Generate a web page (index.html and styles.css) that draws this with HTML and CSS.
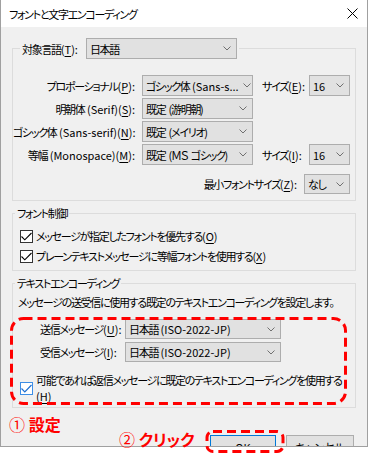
FILE: index.html
```html
<!DOCTYPE html>
<html>
  <head>
    <meta charset="utf-8">
    <title>フォントと文字エンコーディング</title>
    <link rel="stylesheet" href="styles.css">
  </head>
  <body>
    <div class="dialog">
      <div class="titlebar">
        <span class="title">フォントと文字エンコーディング</span>
        <svg class="close" width="11" height="11" viewBox="0 0 11 11"><path d="M0.5 0.5 L10.5 10.5 M10.5 0.5 L0.5 10.5" stroke="#000" stroke-width="1" fill="none"/></svg>
      </div>

      <div class="content">
        <fieldset class="group group-fonts">
          <legend>
            <span class="legend-row">
              <span>対象言語<span class="en">(<u>T</u>):</span></span>
              <span class="combo combo-lang">日本語<svg class="arrow" width="8" height="5" viewBox="0 0 8 5"><path d="M0.5 0.5 L4 4 L7.5 0.5" stroke="#707070" fill="none"/></svg></span>
            </span>
          </legend>

          <div class="font-row first">
            <span class="label">プロポーショナル<span class="en">(<u>P</u>):</span></span>
            <span class="combo combo-font"><span>ゴシック体<span class="en"> (Sans-s...</span></span><svg class="arrow" width="8" height="5" viewBox="0 0 8 5"><path d="M0.5 0.5 L4 4 L7.5 0.5" stroke="#707070" fill="none"/></svg></span>
            <span class="size-label">サイズ<span class="en">(<u>E</u>):</span></span>
            <span class="combo combo-size"><span class="en">16</span><svg class="arrow" width="8" height="5" viewBox="0 0 8 5"><path d="M0.5 0.5 L4 4 L7.5 0.5" stroke="#707070" fill="none"/></svg></span>
          </div>
          <div class="font-row">
            <span class="label">明朝体<span class="en"> (Serif)(<u>S</u>):</span></span>
            <span class="combo combo-font">既定 (游明朝)<svg class="arrow" width="8" height="5" viewBox="0 0 8 5"><path d="M0.5 0.5 L4 4 L7.5 0.5" stroke="#707070" fill="none"/></svg></span>
          </div>
          <div class="font-row">
            <span class="label">ゴシック体<span class="en"> (Sans-serif)(<u>N</u>):</span></span>
            <span class="combo combo-font">既定 (メイリオ)<svg class="arrow" width="8" height="5" viewBox="0 0 8 5"><path d="M0.5 0.5 L4 4 L7.5 0.5" stroke="#707070" fill="none"/></svg></span>
          </div>
          <div class="font-row">
            <span class="label">等幅<span class="en"> (Monospace)(<u>M</u>):</span></span>
            <span class="combo combo-font">既定 (ＭＳ ゴシック)<svg class="arrow" width="8" height="5" viewBox="0 0 8 5"><path d="M0.5 0.5 L4 4 L7.5 0.5" stroke="#707070" fill="none"/></svg></span>
            <span class="size-label">サイズ<span class="en">(<u>I</u>):</span></span>
            <span class="combo combo-size"><span class="en">16</span><svg class="arrow" width="8" height="5" viewBox="0 0 8 5"><path d="M0.5 0.5 L4 4 L7.5 0.5" stroke="#707070" fill="none"/></svg></span>
          </div>
          <div class="min-row">
            <span>最小フォントサイズ<span class="en">(<u>Z</u>):</span></span>
            <span class="combo combo-min">なし<svg class="arrow" width="8" height="5" viewBox="0 0 8 5"><path d="M0.5 0.5 L4 4 L7.5 0.5" stroke="#707070" fill="none"/></svg></span>
          </div>
        </fieldset>

        <fieldset class="group group-control">
          <legend>フォント制御</legend>
          <div class="check first">
            <span class="box"><svg width="11" height="9" viewBox="0 0 11 9"><path d="M0.5 4.5 L3.8 7.8 L10.5 1" stroke="#000" stroke-width="1.1" fill="none"/></svg></span>
            <span>メッセージが指定したフォントを優先する<span class="en">(<u>O</u>)</span></span>
          </div>
          <div class="check">
            <span class="box"><svg width="11" height="9" viewBox="0 0 11 9"><path d="M0.5 4.5 L3.8 7.8 L10.5 1" stroke="#000" stroke-width="1.1" fill="none"/></svg></span>
            <span>プレーンテキストメッセージに等幅フォントを使用する<span class="en">(<u>X</u>)</span></span>
          </div>
        </fieldset>

        <fieldset class="group group-enc">
          <legend>テキストエンコーディング</legend>
          <p class="desc">メッセージの送受信に使用する既定のテキストエンコーディングを設定します。</p>
          <div class="enc-row first">
            <span class="label">送信メッセージ<span class="en">(<u>U</u>):</span></span>
            <span class="combo combo-enc"><span>日本語<span class="en"> (ISO-2022-JP)</span></span><svg class="arrow" width="8" height="5" viewBox="0 0 8 5"><path d="M0.5 0.5 L4 4 L7.5 0.5" stroke="#707070" fill="none"/></svg></span>
          </div>
          <div class="enc-row">
            <span class="label">受信メッセージ<span class="en">(<u>I</u>):</span></span>
            <span class="combo combo-enc"><span>日本語<span class="en"> (ISO-2022-JP)</span></span><svg class="arrow" width="8" height="5" viewBox="0 0 8 5"><path d="M0.5 0.5 L4 4 L7.5 0.5" stroke="#707070" fill="none"/></svg></span>
          </div>
          <div class="check check-reply">
            <span class="box box-focus"><svg width="11" height="9" viewBox="0 0 11 9"><path d="M0.5 4.5 L3.8 7.8 L10.5 1" stroke="#1e6fd0" stroke-width="1.2" fill="none"/></svg></span>
            <span class="reply-text">可能であれば返信メッセージに既定のテキストエンコーディングを使用する<br><span class="en">(<u>H</u>)</span></span>
          </div>
        </fieldset>

        <div class="buttons">
          <button class="btn btn-ok"><span class="en">OK</span></button>
          <button class="btn btn-cancel">キャンセル</button>
        </div>
      </div>
    </div>

    <!-- annotations drawn over the dialog -->
    <svg class="mark mark-enc" width="338" height="88" viewBox="0 0 338 88"><rect x="1.5" y="1.5" width="334" height="85" rx="12" fill="none" stroke="#f00" stroke-width="3" stroke-dasharray="9 5"/></svg>
    <svg class="mark mark-ok" width="81" height="24" viewBox="0 0 81 24"><rect x="2" y="1.5" width="76" height="20" rx="6" fill="none" stroke="#f00" stroke-width="3" stroke-dasharray="9 5"/></svg>
    <div class="note note-set"><span class="num">①</span> 設定</div>
    <div class="note note-click"><span class="num">②</span> クリック</div>
  </body>
</html>
```

FILE: styles.css
```css
* {
  box-sizing: border-box;
}

body {
  margin: 0;
  background-color: #fff;
  color: #000;
  font-family: "Noto Sans CJK JP", sans-serif;
  font-size: 11px;
  line-height: 16px;
  letter-spacing: -1.3px;
  word-spacing: 2px;
  font-feature-settings: "palt";
}

/* latin runs keep normal spacing, only kana are squeezed */
.en {
  letter-spacing: 0;
  word-spacing: 0;
}

u {
  text-decoration-thickness: 1px;
  text-underline-offset: 2px;
}

.dialog {
  width: 368px;
  height: 447px;
  border: 1px solid #a0a0a0;
  border-top: 0;
  background-color: #f0f0f0;
  overflow: hidden;
}

.titlebar {
  height: 27px;
  background-color: #fff;
  display: flex;
  align-items: center;
  justify-content: space-between;
  padding: 0 9px 0 8px;
}

.content {
  padding: 0 11px;
}

.group {
  margin: 0;
  padding: 0 0 6px;
  border: 1px solid #dcdcdc;
  min-width: 0;
}
.group legend {
  padding: 0 2px;
}

.group-fonts {
  margin-top: 11px;
}
.group-fonts legend {
  margin-left: 7px;
}
.legend-row {
  display: flex;
  align-items: center;
  gap: 8px;
}

.combo {
  display: flex;
  align-items: center;
  justify-content: space-between;
  height: 21px;
  padding: 0 5px 0 3px;
  background-color: #e1e1e1;
  border: 1px solid #adadad;
  white-space: nowrap;
  overflow: hidden;
}
.arrow {
  flex-shrink: 0;
  margin-left: 4px;
}
.combo-lang {
  width: 151px;
}

.font-row {
  display: flex;
  align-items: center;
  height: 21px;
  margin-top: 2px;
}
.font-row.first {
  margin-top: 16px;
}
.font-row .label {
  width: 122px;
  text-align: right;
  white-space: nowrap;
}
.combo-font {
  margin-left: 7px;
  width: 111px;
}
.size-label {
  margin-left: 9px;
  width: 40px;
  white-space: nowrap;
}
.combo-size {
  margin-left: 7px;
  width: 41px;
}

.min-row {
  display: flex;
  align-items: center;
  justify-content: flex-end;
  height: 20px;
  margin-top: 9px;
  padding-right: 5px;
}
.combo-min {
  margin-left: 7px;
  width: 46px;
  height: 20px;
}

.group-control {
  margin-top: 4px;
  padding-bottom: 4px;
}
.group-control legend,
.group-enc legend {
  margin-left: 2px;
}

.check {
  display: flex;
  align-items: center;
  gap: 3px;
  height: 20px;
  padding-left: 7px;
}
.check.first {
  margin-top: 5px;
}
.box {
  width: 13px;
  height: 13px;
  flex-shrink: 0;
  border: 1px solid #333;
  background-color: #fff;
  display: flex;
  align-items: center;
  justify-content: center;
}
.box-focus {
  border-color: #3d8ee6;
}

.group-enc {
  margin-top: 4px;
  padding-bottom: 3px;
}
.desc {
  margin: 3px 0 0 5px;
  white-space: nowrap;
}
.enc-row {
  display: flex;
  align-items: center;
  height: 20px;
  margin-top: 3px;
  padding-left: 27px;
}
.enc-row.first {
  margin-top: 9px;
}
.enc-row .label {
  width: 85px;
  white-space: nowrap;
}
.combo-enc {
  width: 156px;
  height: 20px;
}
.check-reply {
  height: auto;
  margin-top: 10px;
}

.buttons {
  display: flex;
  justify-content: flex-end;
  gap: 10px;
  margin-top: 27px;
  padding-right: 2px;
}
.btn {
  height: 23px;
  padding: 0;
  font: inherit;
  color: #000;
  background-color: #e1e1e1;
  border: 1px solid #adadad;
}
.btn-ok {
  width: 66px;
  border-color: #0078d7;
}
.btn-cancel {
  width: 68px;
}

.mark {
  position: absolute;
}
.mark-enc {
  left: 10px;
  top: 317px;
}
.mark-ok {
  left: 205px;
  top: 430px;
}

.note {
  position: absolute;
  color: #f00;
  font-size: 16px;
  line-height: 16px;
  font-weight: bold;
  letter-spacing: 0;
  word-spacing: 0;
}
.note .num {
  font-weight: normal;
}
.note-set {
  left: 9px;
  top: 416px;
}
.note-click {
  left: 119px;
  top: 431px;
}
```
